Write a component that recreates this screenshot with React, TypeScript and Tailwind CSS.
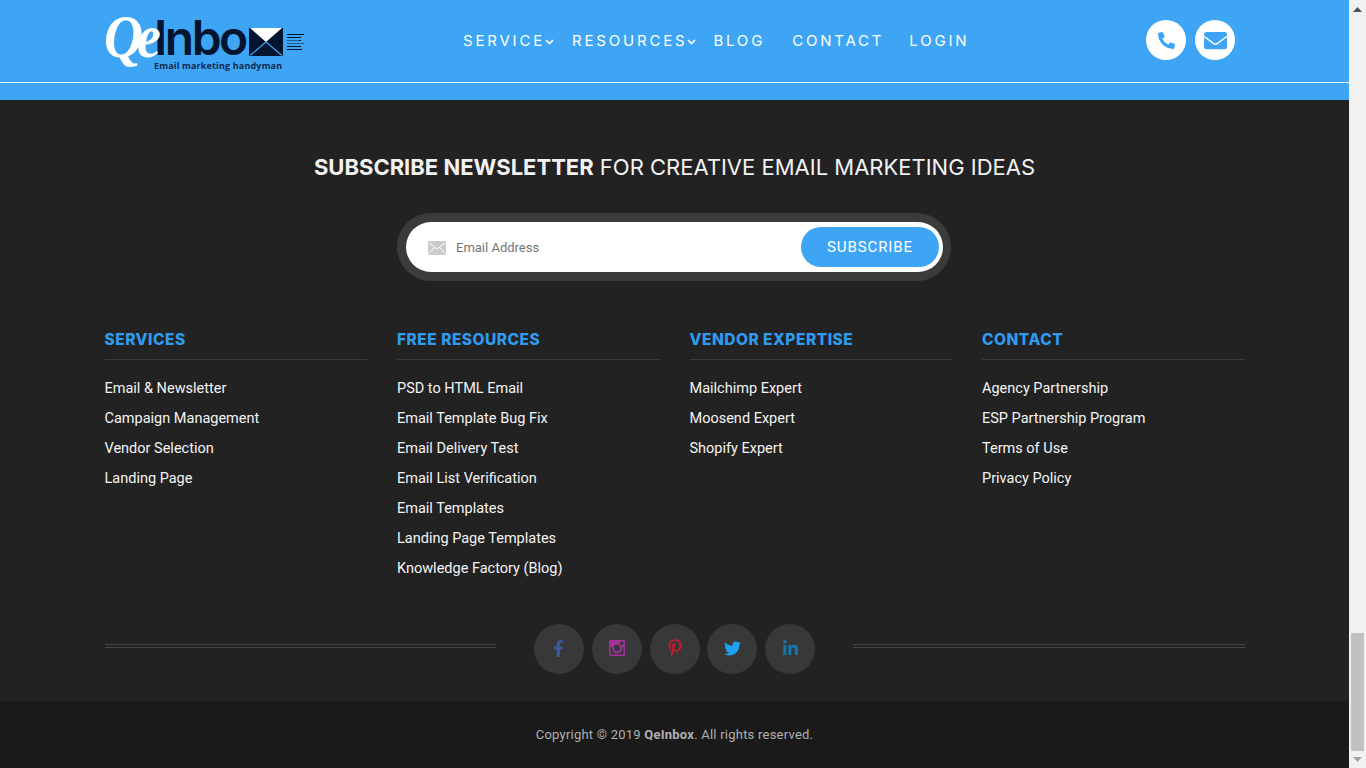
import { FaEnvelope, FaFacebookF, FaLinkedinIn, FaPhoneAlt, FaPinterestP, FaTwitter } from "react-icons/fa";

const columns = [
  { title: "SERVICES", links: ["Email & Newsletter", "Campaign Management", "Vendor Selection", "Landing Page"] },
  {
    title: "FREE RESOURCES",
    links: [
      "PSD to HTML Email",
      "Email Template Bug Fix",
      "Email Delivery Test",
      "Email List Verification",
      "Email Templates",
      "Landing Page Templates",
      "Knowledge Factory (Blog)",
    ],
  },
  { title: "VENDOR EXPERTISE", links: ["Mailchimp Expert", "Moosend Expert", "Shopify Expert"] },
  { title: "CONTACT", links: ["Agency Partnership", "ESP Partnership Program", "Terms of Use", "Privacy Policy"] },
];

function Chevron() {
  return (
    <svg width="9" height="6" viewBox="0 0 9 6" className="mt-[1px]" fill="none">
      <path d="M1 1l3.500 3.500L8 1" stroke="white" strokeWidth="1.600" />
    </svg>
  );
}

function Logo() {
  return (
    <div className="relative w-[200px] h-[70px] shrink-0">
      <span className="absolute left-[49px] top-[13px] font-['Inter',sans-serif] font-semibold text-[48px] leading-[36px] tracking-[-2.500px] text-[#03142f]">
        Inbo
      </span>
      <span className="absolute left-[-1px] top-[5px] scale-y-[1.15] font-['Liberation_Serif',serif] italic font-bold text-[54px] leading-[48px] tracking-[-6px] text-white">
        Qe
      </span>
      <svg className="absolute left-[144px] top-[21px]" width="34" height="28" viewBox="0 0 34 28">
        <rect width="34" height="28" fill="#03142f" />
        <path d="M1 0h32L17 14z" fill="white" />
        <path d="M1 27.500L17 14l16 13.500" stroke="#3ea5f5" strokeWidth="1.200" fill="none" />
      </svg>
      <svg className="absolute left-[182px] top-[27px]" width="18" height="18" viewBox="0 0 18 18">
        <path d="M0 .5h17M0 3.500h14M0 6.500h14M0 9.500h17M0 12.500h14M0 15.500h15" stroke="#03142f" strokeWidth="1" />
        <path d="M0 6.500h12M0 9.500h17" stroke="#1e5f9a" strokeWidth="1" />
      </svg>
      <span className="absolute left-[49px] top-[52px] font-['Open_Sans',sans-serif] font-bold text-[9px] leading-[13px] text-[#10294d] whitespace-nowrap tracking-[0.150px]">
        Email marketing handyman
      </span>
    </div>
  );
}

function InstagramIcon() {
  return (
    <svg width="16" height="16" viewBox="0 0 16 16">
      <path
        fillRule="evenodd"
        d="M1.500 0h13A1.500 1.500 0 0 1 16 1.500v13a1.500 1.500 0 0 1-1.500 1.500h-13A1.500 1.500 0 0 1 0 14.500v-13A1.500 1.500 0 0 1 1.500 0zM1.500 7v6.800c0 .4.300.7.700.7h11.600c.4 0 .7-.3.700-.7V7h-1.700a5 5 0 1 1-9.600 0zM8 4.800a3.200 3.200 0 1 0 0 6.400 3.200 3.200 0 0 0 0-6.400zM12 1.500a1 1 0 0 0-1 1V4a1 1 0 0 0 1 1h1.500a1 1 0 0 0 1-1V2.500a1 1 0 0 0-1-1z"
        fill="#a5309b"
      />
    </svg>
  );
}

function Social({ children }: { children: React.ReactNode }) {
  return <div className="w-[50px] h-[50px] rounded-full bg-[#383838] flex items-center justify-center pb-[2px]">{children}</div>;
}

function Rule() {
  return <div className="flex-1 h-[4px] mt-[-7px] border-y border-[#454545]" />;
}

export default function App() {
  return (
    <div className="flex h-screen overflow-hidden font-['Roboto',sans-serif]">
      <div className="flex-1 min-w-0 flex flex-col">
        {/* Header */}
        <header className="h-[100px] bg-[#3ea5f5]">
          <div className="h-[83px] border-b border-white flex items-center pl-[105px] pr-[114px] pt-[1px]">
            <Logo />
            <nav className="flex items-center ml-[158px] font-['Inter',sans-serif] text-[15px] tracking-[2.800px] text-white">
              <span className="flex items-center">SERVICE<Chevron /></span>
              <span className="flex items-center ml-[18px]">RESOURCES<Chevron /></span>
              <span className="ml-[17px]">BLOG</span>
              <span className="ml-[27px]">CONTACT</span>
              <span className="ml-[25px]">LOGIN</span>
            </nav>
            <div className="ml-auto flex gap-[9px] pb-[3px]">
              <div className="w-[40px] h-[40px] rounded-full bg-white flex items-center justify-center text-[#3ea5f5] text-[17px]">
                <FaPhoneAlt />
              </div>
              <div className="w-[40px] h-[40px] rounded-full bg-white flex items-center justify-center text-[#3ea5f5] text-[23px]">
                <FaEnvelope />
              </div>
            </div>
          </div>
        </header>

        {/* Newsletter + links */}
        <footer className="h-[601px] bg-[#222222]">
          <h2 className="pt-[52px] text-center font-['Inter',sans-serif] text-[22px] leading-[30px] text-[#f2f2f2]">
            <span className="font-bold">SUBSCRIBE NEWSLETTER</span> FOR CREATIVE EMAIL MARKETING IDEAS
          </h2>
          <div className="mt-[31px] ml-[397px] w-[554px] h-[68px] rounded-full bg-[#3b3b3b] p-[9px] pr-[8px]">
            <div className="h-[50px] rounded-full bg-white flex items-center pl-[22px] pr-[4px]">
              <svg width="18" height="14" viewBox="0 0 18 14" className="mt-[1px]">
                <rect width="18" height="14" rx="1" fill="#cbcbcb" />
                <path d="M1 2l8 6 8-6M1 12.500l5.500-6M17 12.500l-5.500-6" stroke="white" strokeWidth="1" fill="none" />
              </svg>
              <span className="ml-[10px] pt-[1px] text-[13px] text-[#757575]">Email Address</span>
              <button className="ml-auto w-[138px] h-[40px] rounded-full bg-[#3ea5f5] text-white text-[15px] tracking-[0.900px]">
                SUBSCRIBE
              </button>
            </div>
          </div>

          <div className="mx-auto w-[1140px] mt-[47px] grid grid-cols-4 gap-[30px] h-[283px]">
            {columns.map((col) => (
              <div key={col.title}>
                <h3 className="pt-[1px] font-['Inter',sans-serif] font-extrabold text-[15.500px] leading-[22px] tracking-[0.500px] text-[#2f9bee] pb-[8px] border-b border-[#3b3b3b]">
                  {col.title}
                </h3>
                <ul className="mt-[14px]">
                  {col.links.map((l) => (
                    <li key={l} className="h-[30px] leading-[30px] text-[14.500px] text-[#f4f4f4]">
                      {l}
                    </li>
                  ))}
                </ul>
              </div>
            ))}
          </div>

          <div className="mx-auto w-[1140px] mt-[13px] flex items-center">
            <Rule />
            <div className="flex gap-[7.750px] mx-[38px]">
              <Social><FaFacebookF className="text-[#3b5998] text-[17px] -translate-x-[1px]" /></Social>
              <Social><InstagramIcon /></Social>
              <Social><FaPinterestP className="text-[#bd1f2d] text-[18px]" /></Social>
              <Social><FaTwitter className="text-[#1da1f2] text-[17px]" /></Social>
              <Social><FaLinkedinIn className="text-[#1577a8] text-[17px]" /></Social>
            </div>
            <Rule />
          </div>
        </footer>

        <div className="flex-1 bg-[#1a1a1a] flex items-center justify-center text-[13px] text-[#b0b0b0] tracking-[0.230px]">
          <span>
            Copyright © 2019 <b>QeInbox</b>. All rights reserved.
          </span>
        </div>
      </div>

      {/* Scrollbar */}
      <div className="w-[17px] bg-[#f1f1f1] flex flex-col items-center">
        <svg width="9" height="5" viewBox="0 0 9 5" className="mt-[7px] shrink-0">
          <path d="M4.500 0L9 5H0z" fill="#505050" />
        </svg>
        <div className="mt-auto w-[13px] h-[118px] bg-[#c1c1c1]" />
        <svg width="9" height="5" viewBox="0 0 9 5" className="mt-[6px] mb-[6px] shrink-0">
          <path d="M0 0h9L4.500 5z" fill="#a3a3a3" />
        </svg>
      </div>
    </div>
  );
}
